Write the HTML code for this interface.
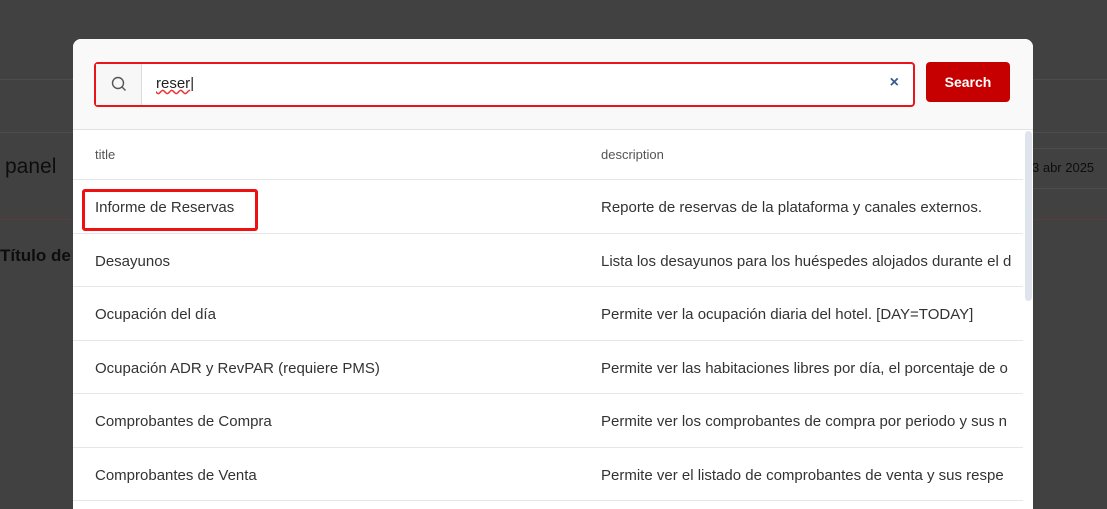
<!DOCTYPE html>
<html><head><meta charset="utf-8"><style>
*{margin:0;padding:0;box-sizing:border-box}
body{width:1107px;height:495px;overflow:hidden;background:#414141;font-family:"Liberation Sans",sans-serif;position:relative}
.hl{position:absolute;left:0;right:0;height:1px;background:#4d4d4d}
.bgt{position:absolute;color:#0d0d0d}
.modal{position:absolute;left:73px;top:39px;width:960px;height:470px;background:#fff;border-radius:8px 8px 0 0;overflow:hidden}
.head{height:91px;background:#f9f9f9;border-bottom:1px solid #e2e2e2;position:relative}
.inp{position:absolute;left:21px;top:23px;width:821px;height:45px;border:2px solid #e8161b;border-radius:4px;background:#fff}
.ico{position:absolute;left:0;top:0;width:46px;height:41px;background:#f7f7f7;border-right:1px solid #dcdcdc}
.txt{position:absolute;left:60px;top:11px;font-size:15px;color:#222}
.x{position:absolute;right:14px;top:10px;color:#3b5a8c;font-size:16px;font-weight:bold}
.btn{position:absolute;left:853px;top:23px;width:84px;height:40px;background:#c60000;border-radius:4px;color:#fff;font-size:14px;font-weight:bold;text-align:center;line-height:40px}
.row{position:absolute;left:0;width:950px;border-bottom:1px solid #e6e6e6;font-size:15px;color:#333}
.row span{position:absolute;top:0}
.c1{left:22px}.c2{left:528px;white-space:nowrap}
.th{font-size:13px;color:#555}
.sb{position:absolute;left:952px;top:92px;width:7px;height:170px;background:#dfe4ec;border-radius:4px}
</style></head><body>
<div class="hl" style="top:79px"></div>
<div class="hl" style="top:132px"></div>
<div class="hl" style="top:219px;background:#5a3a3a"></div>
<div class="hl" style="top:148px;left:1033px"></div>
<div class="hl" style="top:188px;left:1033px"></div>
<div class="bgt" style="left:5px;top:155px;font-size:21px">panel</div>
<div class="bgt" style="left:0;top:246px;font-size:17px;font-weight:bold">Título de</div>
<div class="bgt" style="left:1032px;top:160px;font-size:13px">3 abr 2025</div>
<div class="modal">
<div class="head">
<div class="inp"><div class="ico"><svg width="46" height="41"><circle cx="22" cy="19" r="5.5" fill="none" stroke="#555" stroke-width="1.4"/><line x1="26" y1="23" x2="29.5" y2="26.5" stroke="#555" stroke-width="1.4"/></svg></div>
<div class="txt"><span style="text-decoration:underline wavy #e33">reser</span>|</div><div class="x">×</div></div>
<div class="btn">Search</div>
</div>
<div class="row th" style="top:91px;height:50px"><span class="c1" style="top:17px">title</span><span class="c2" style="top:17px">description</span></div>
<div class="row" style="top:141px;height:54px"><span class="c1" style="top:19px">Informe de Reservas</span><span class="c2" style="top:19px">Reporte de reservas de la plataforma y canales externos.</span></div>
<div style="position:absolute;left:9px;top:150px;width:176px;height:42px;border:3px solid #ee1111;border-radius:3px"></div>
<div class="row" style="top:195px;height:53px"><span class="c1" style="top:19px">Desayunos</span><span class="c2" style="top:19px">Lista los desayunos para los huéspedes alojados durante el d</span></div>
<div class="row" style="top:248px;height:54px"><span class="c1" style="top:19px">Ocupación del día</span><span class="c2" style="top:19px">Permite ver la ocupación diaria del hotel. [DAY=TODAY]</span></div>
<div class="row" style="top:302px;height:53px"><span class="c1" style="top:19px">Ocupación ADR y RevPAR (requiere PMS)</span><span class="c2" style="top:19px">Permite ver las habitaciones libres por día, el porcentaje de o</span></div>
<div class="row" style="top:355px;height:54px"><span class="c1" style="top:19px">Comprobantes de Compra</span><span class="c2" style="top:19px">Permite ver los comprobantes de compra por periodo y sus n</span></div>
<div class="row" style="top:409px;height:53px"><span class="c1" style="top:19px">Comprobantes de Venta</span><span class="c2" style="top:19px">Permite ver el listado de comprobantes de venta y sus respe</span></div>
<div class="sb"></div>
</div>
</body></html>
